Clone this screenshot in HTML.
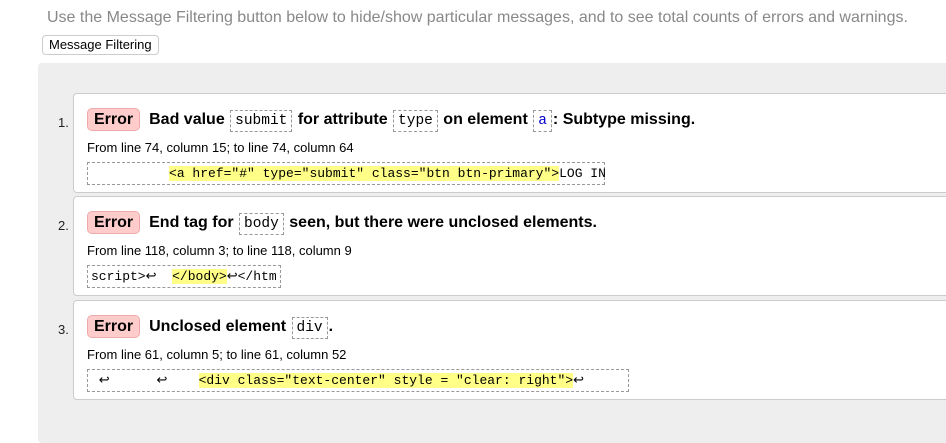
<!DOCTYPE html>
<html><head><style>
body{margin:0;width:946px;height:425px;overflow:hidden;background:#fff;font-family:"Liberation Sans",Arial,sans-serif;position:relative}
.intro{position:absolute;left:47px;top:9px;font-size:16px;color:#888}
.btn{position:absolute;left:42px;top:35px;height:18px;padding:0 6px;border:1px solid #ccc;border-radius:4px;font-size:13px;line-height:18px;color:#000;background:#fff}
.panel{position:absolute;left:38px;top:63px;width:920px;height:380px;background:#eee;border-radius:4px}
.card{position:absolute;left:73px;width:890px;height:100px;background:#fff;border:1px solid #ccc;border-radius:4px;box-sizing:border-box}
.num{position:absolute;left:-16px;top:21px;font-size:13px;color:#222}
.title{position:absolute;left:13px;top:14px;font-size:16px;font-weight:bold;white-space:nowrap;color:#000}
.err{display:inline-block;background:#fcc;border:1px solid #eaa;border-radius:5px;padding:0 6px;line-height:21px;margin-right:9px}
.c{font-family:"Liberation Mono",monospace;font-weight:normal;font-size:14.5px;border:1px dashed #999;padding:2px 4px;margin:0 1px}
.c a{color:#00c}
.from{position:absolute;left:13px;top:46px;font-size:13px;color:#000}
.code{position:absolute;left:13px;top:68px;height:21px;border:1px dashed #999;font-family:"Liberation Mono",monospace;font-size:13px;line-height:21px;white-space:pre;padding:0 3px;color:#000}
.hl{background:#ff8}
</style></head><body>
<div class="intro">Use the Message Filtering button below to hide/show particular messages, and to see total counts of errors and warnings.</div>
<div class="btn">Message Filtering</div>
<div class="panel"></div>
<div class="card" style="top:93px"><span class="num">1.</span>
<div class="title"><span class="err">Error</span>Bad value <span class="c">submit</span> for attribute <span class="c">type</span> on element <span class="c"><a>a</a></span>: Subtype missing.</div>
<div class="from">From line 74, column 15; to line 74, column 64</div>
<div class="code" style="width:510px">          <span class="hl">&lt;a href="#" type="submit" class="btn btn-primary"&gt;</span>LOG IN</div></div>
<div class="card" style="top:196px"><span class="num">2.</span>
<div class="title"><span class="err">Error</span>End tag for <span class="c">body</span> seen, but there were unclosed elements.</div>
<div class="from">From line 118, column 3; to line 118, column 9</div>
<div class="code">script&gt;↩  <span class="hl">&lt;/body&gt;</span>↩&lt;/htm</div></div>
<div class="card" style="top:300px"><span class="num">3.</span>
<div class="title"><span class="err">Error</span>Unclosed element <span class="c">div</span>.</div>
<div class="from">From line 61, column 5; to line 61, column 52</div>
<div class="code" style="width:534px"> ↩      ↩    <span class="hl">&lt;div class="text-center" style = "clear: right"&gt;</span>↩</div></div>
</body></html>
